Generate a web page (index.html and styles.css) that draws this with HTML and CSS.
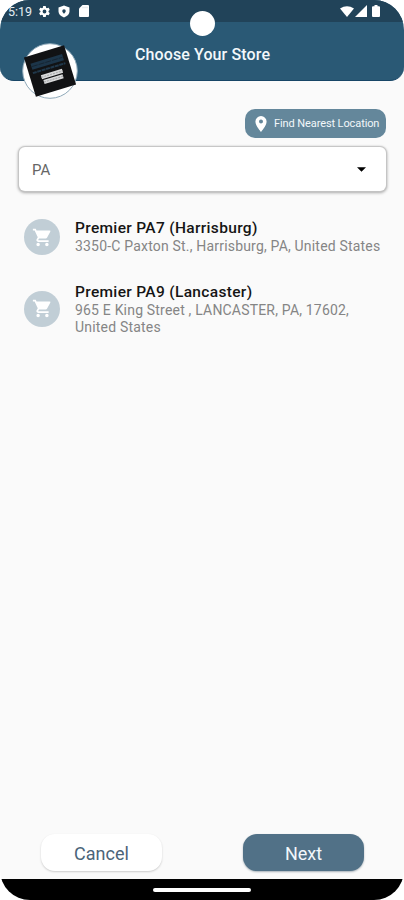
FILE: index.html
```html
<!DOCTYPE html>
<html lang="en">
<head>
<meta charset="utf-8">
<title>Choose Your Store</title>
<link rel="stylesheet" href="styles.css">
</head>
<body>
<div class="phone">
  <header class="header">
    <div class="status">
      <span class="time">5:19</span>
      <svg class="gear" viewBox="0 0 24 24"><path fill-rule="evenodd" d="M19.4 13l.1-1-.1-1 2.1-1.6c.2-.2.3-.4.1-.7l-2-3.4c-.1-.2-.4-.3-.6-.2l-2.5 1-1.7-1-.4-2.6a.5.5 0 0 0-.5-.5h-4a.5.5 0 0 0-.5.5L9 5.100l-1.700 1-2.500-1c-.2-.1-.5 0-.6.2l-2 3.400c-.1.3-.1.5.1.7L4.500 11v2l-2.200 1.600c-.2.2-.2.4-.1.700l2 3.400c.1.2.4.3.6.2l2.500-1 1.700 1 .4 2.600c0 .300.200.500.500.500h4c.300 0 .500-.200.500-.500l.400-2.600 1.700-1 2.500 1c.200.100.500 0 .600-.200l2-3.400c.100-.300.100-.500-.100-.700zM12 15.500a3.500 3.500 0 1 1 0-7 3.500 3.500 0 0 1 0 7z"/></svg>
      <svg class="shield" viewBox="0 0 24 24"><path fill-rule="evenodd" d="M12 0 1 4v8c0 5 4 9 11 12 7-3 11-7 11-12V4zM12 7.500a3.500 3.500 0 0 1 3.500 3.500c0 2.500-3.500 5.500-3.500 5.500s-3.500-3-3.500-5.500a3.500 3.500 0 0 1 3.500-3.500z"/></svg>
      <svg class="sd" viewBox="0 0 10 12"><path d="M3.500 0H9a1 1 0 0 1 1 1v10a1 1 0 0 1-1 1H1a1 1 0 0 1-1-1V3.500z"/><path d="M4 1.800v1.400M6 1.800v1.400M8 1.800v1.400" stroke="#b9c4cc" stroke-width=".6"/></svg>
      <svg class="wifi" viewBox="0 0 14 11"><path d="M0 2.500Q7-2.200 14 2.500L7 11z"/></svg>
      <svg class="signal" viewBox="0 0 12 12"><path d="M12 0v12H0z"/></svg>
      <svg class="battery" viewBox="0 0 8 12"><path d="M2.500 0h3v1.300H7a1 1 0 0 1 1 1V11a1 1 0 0 1-1 1H1a1 1 0 0 1-1-1V2.300a1 1 0 0 1 1-1h1.500z"/></svg>
    </div>
    <h1 class="title">Choose Your Store</h1>
    <div class="camera"></div>
    <svg class="logo" viewBox="0 0 56 56">
      <circle cx="28" cy="28" r="27.300" fill="#fff" stroke="#8fa9b9" stroke-width="1"/>
      <g transform="rotate(-17 28 28)">
        <rect x="7" y="7.500" width="42" height="41" fill="#111214"/>
        <path d="M11.500 18.500h33" stroke="#1c3549" stroke-width="6.500"/>
        <path d="M12 18.500h32" stroke="#14222f" stroke-width=".8" stroke-dasharray="6 1"/>
        <path d="M11 25h34" stroke="#20384b" stroke-width="2" stroke-dasharray="4 .6"/>
        <path d="M18 31.500h22M19 36.800h20" stroke="#d8d9da" stroke-width="4.200"/>
        <path d="M18 31.500h22M19 36.800h20" stroke="#a5a7a9" stroke-width="1" stroke-dasharray="2 1"/>
      </g>
    </svg>
  </header>
  <main class="main">
    <button class="nearest"><svg class="pin" viewBox="5 2 14 20"><path fill-rule="evenodd" d="M12 2a7 7 0 0 0-7 7c0 5.250 7 13 7 13s7-7.750 7-13a7 7 0 0 0-7-7zm0 9.500a2.500 2.500 0 1 1 0-5 2.500 2.500 0 0 1 0 5z"/></svg><span>Find Nearest Location</span></button>
    <div class="select"><span>PA</span><svg class="arrow" viewBox="0 0 10 5"><path d="M0 0h10L5 5z"/></svg></div>
    <ul class="stores">
      <li class="store">
        <span class="avatar"><svg viewBox="0 0 24 24"><path d="M7 18a2 2 0 1 0 0 4 2 2 0 0 0 0-4zM1 2v2h2l3.600 7.590-1.350 2.450C4.520 15.370 5.480 17 7 17h12v-2H7.420a.25.25 0 0 1-.22-.37L8.100 13h7.450c.75 0 1.410-.41 1.750-1.030L20.880 5.480A1 1 0 0 0 20 4H5.210l-.94-2zM17 18a2 2 0 1 0 0 4 2 2 0 0 0 0-4z"/></svg></span>
        <div class="info"><div class="name">Premier PA7 (Harrisburg)</div><div class="addr">3350-C Paxton St., Harrisburg, PA, United States</div></div>
      </li>
      <li class="store">
        <span class="avatar raised"><svg viewBox="0 0 24 24"><path d="M7 18a2 2 0 1 0 0 4 2 2 0 0 0 0-4zM1 2v2h2l3.600 7.590-1.350 2.450C4.520 15.370 5.480 17 7 17h12v-2H7.420a.25.25 0 0 1-.22-.37L8.100 13h7.450c.75 0 1.410-.41 1.750-1.030L20.880 5.480A1 1 0 0 0 20 4H5.210l-.94-2zM17 18a2 2 0 1 0 0 4 2 2 0 0 0 0-4z"/></svg></span>
        <div class="info"><div class="name">Premier PA9 (Lancaster)</div><div class="addr">965 E King Street , LANCASTER, PA, 17602,<br>United States</div></div>
      </li>
    </ul>
  </main>
  <div class="actions"><button class="btn cancel">Cancel</button><button class="btn next">Next</button></div>
  <div class="navbar"><div class="handle"></div></div>
</div>
</body>
</html>
```

FILE: styles.css
```css
* { box-sizing: border-box; }
body { margin: 0; background: #fff; font-family: Roboto, "Liberation Sans", sans-serif; }
button { border: 0; padding: 0; font-family: inherit; }
svg { display: block; flex: none; }
.phone { width: 404px; height: 900px; display: flex; flex-direction: column; background: #fafafa; border-radius: 30px; overflow: hidden; }
.header { position: relative; height: 81px; flex: none; background: #2a5975; border-radius: 0 0 14px 14px; border-bottom: 1px solid #174566; }
.status { height: 22px; display: flex; align-items: center; padding: 0 24px 0 8px; background: #214359; fill: #fff; }
.time { width: 30px; font-size: 12.500px; line-height: 22px; color: #e4edf3; padding-top: 1px; }
.gear { width: 13px; height: 13px; }
.shield { width: 12px; height: 13px; margin-left: 7px; }
.sd { width: 10px; height: 12px; margin-left: 9px; }
.wifi { width: 14px; height: 11px; margin-left: auto; }
.signal { width: 12px; height: 12px; margin-left: 1px; }
.battery { width: 8px; height: 12px; margin-left: 5px; }
.title { margin: 22px 0 0; text-align: center; color: #f3f8fb; font-size: 16px; line-height: 22px; font-weight: 500; letter-spacing: .12px; padding-left: 1px; }
.camera { position: absolute; left: 190px; top: 11px; width: 25px; height: 25px; border-radius: 50%; background: #fff; }
.logo { position: absolute; left: 22px; top: 43px; width: 56px; height: 56px; }
.main { flex: 1; padding: 28px 18px 0 19px; display: flex; flex-direction: column; }
.nearest { align-self: flex-end; width: 141px; height: 29px; border-radius: 10px; background: #64879b; color: #f2f7fa; display: flex; align-items: center; padding-left: 10px; font-size: 11px; letter-spacing: -.1px; white-space: nowrap; }
.pin { width: 12px; height: 16px; margin-right: 7px; fill: #fff; }
.select { height: 44px; margin-top: 9px; flex: none; background: #fff; border-radius: 6px; box-shadow: 0 0 1px 1px #c5c5c5, 0 1px 3px 1px #aaa; display: flex; align-items: center; justify-content: space-between; padding: 1px 20px 0 13px; color: #666; font-size: 15px; }
.arrow { width: 9px; height: 5px; fill: #000; }
.stores { list-style: none; margin: 28px 0 0; padding: 0 0 0 5px; }
.store { display: flex; align-items: center; margin-bottom: 28px; }
.avatar { width: 36px; height: 36px; flex: none; border-radius: 50%; background: #c1ced6; display: flex; align-items: center; justify-content: center; margin-right: 15px; }
.raised { margin-bottom: 2px; }
.avatar svg { width: 21px; height: 21px; fill: #fff; }
.info { white-space: nowrap; }
.name { font-size: 15.500px; line-height: 19px; font-weight: 500; letter-spacing: .33px; color: #151515; }
.addr { font-size: 14px; line-height: 17px; letter-spacing: .19px; color: #858585; }
.actions { display: flex; justify-content: space-between; padding: 0 40px 8px 41px; }
.btn { width: 121px; height: 37px; border-radius: 14px; font-size: 18px; padding-top: 1px; }
.cancel { background: #fff; color: #4b6479; box-shadow: 0 1px 2px #ccc; }
.next { background: #517187; color: #f1f7fb; box-shadow: 0 1px 2px #a6b0b7; }
.navbar { height: 21px; flex: none; background: #000; display: flex; justify-content: center; padding-top: 9px; }
.handle { width: 98px; height: 4px; border-radius: 2px; background: #fff; }
```
